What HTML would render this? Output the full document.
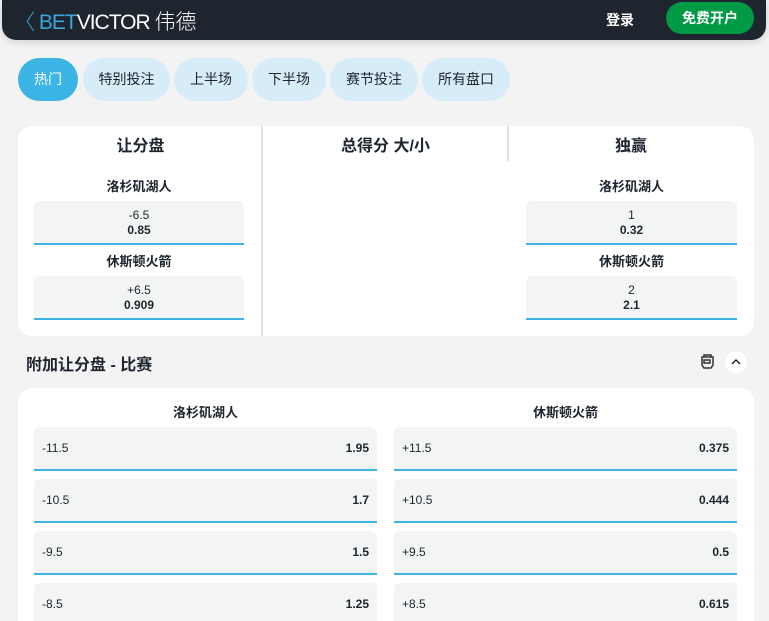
<!DOCTYPE html>
<html><head><meta charset="utf-8"><style>
*{box-sizing:border-box;margin:0;padding:0}
html,body{width:769px;height:621px;overflow:hidden}
body{background:#f3f3f3;font-family:"Liberation Sans","Noto Sans CJK SC",sans-serif;color:#1e252e;position:relative}
.hdr{position:absolute;left:2px;top:0;width:764px;height:40px;background:#1e252e;border-radius:0 0 14px 14px;box-shadow:0 2px 8px rgba(0,0,0,.15)}
.logo{position:absolute;left:12px;top:6px;font-size:21px;letter-spacing:-1px;color:#fff;font-weight:300}
.logo b{color:#3aa7d8;font-weight:300}
.login{position:absolute;left:604px;top:10px;color:#fff;font-weight:bold;font-size:14px}
.reg{position:absolute;left:664px;top:2px;width:88px;height:32px;border-radius:16px;background:#009a44;color:#fff;font-weight:bold;font-size:14px;text-align:center;line-height:32px}
.tab{position:absolute;top:58px;height:43px;border-radius:22px;background:#d6ecf8;font-size:14px;line-height:42px;text-align:center}
.card{position:absolute;left:18px;width:736px;background:#fff;border-radius:14px}
.ab{position:absolute;font-size:14px;text-align:center}
.h{font-weight:bold;font-size:16px}
.t{font-weight:bold;font-size:13px}
.btn{position:absolute;background:#f3f4f4;border-radius:6px 6px 0 0;border-bottom:2px solid #3cb4e5;font-size:12px;text-align:center;padding-top:7px;line-height:15px}
.btn b{display:block}
.row{position:absolute;height:44px;background:#f3f4f4;border-radius:6px 6px 0 0;border-bottom:2px solid #3cb4e5;font-size:12px;line-height:43px;padding:0 8px}
.row b{float:right}
.div{position:absolute;width:2px;background:#e2e2e2}
</style></head><body>
<div class="hdr"><div class="logo"><b>〈 BET</b>VICTOR <span style="letter-spacing:0">伟德</span></div><div class="login">登录</div><div class="reg">免费开户</div></div>
<div class="tab" style="left:18px;width:60px;background:#3cb4e5;color:#fff">热门</div>
<div class="tab" style="left:83px;width:87px">特别投注</div>
<div class="tab" style="left:174px;width:74px">上半场</div>
<div class="tab" style="left:252px;width:74px">下半场</div>
<div class="tab" style="left:330px;width:88px">赛节投注</div>
<div class="tab" style="left:422px;width:88px">所有盘口</div>
<div class="card" style="top:126px;height:210px">
<div class="div" style="left:243px;top:0;height:210px"></div>
<div class="div" style="left:489px;top:0;height:35px"></div>
<div class="ab h" style="left:0;width:245px;top:6px">让分盘</div>
<div class="ab h" style="left:245px;width:245px;top:6px">总得分 大/小</div>
<div class="ab h" style="left:490px;width:246px;top:6px">独赢</div>
<div class="ab t" style="left:16px;width:210px;top:50px">洛杉矶湖人</div>
<div class="ab t" style="left:16px;width:210px;top:125px">休斯顿火箭</div>
<div class="ab t" style="left:508px;width:211px;top:50px">洛杉矶湖人</div>
<div class="ab t" style="left:508px;width:211px;top:125px">休斯顿火箭</div>
<div class="btn" style="left:16px;top:75px;width:210px;height:44px">-6.5<b>0.85</b></div>
<div class="btn" style="left:16px;top:150px;width:210px;height:44px">+6.5<b>0.909</b></div>
<div class="btn" style="left:508px;top:75px;width:211px;height:44px">1<b>0.32</b></div>
<div class="btn" style="left:508px;top:150px;width:211px;height:44px">2<b>2.1</b></div>
</div>
<div class="ab" style="left:26px;top:351px;font-weight:bold;font-size:16px">附加让分盘 - 比赛</div>
<svg style="position:absolute;left:699px;top:353px" width="17" height="17" viewBox="0 0 17 17"><path d="M3 4h11v8l-2 3H5l-2-3z M5 2h7v2H5z M5 7h6v3H5z" fill="none" stroke="#333" stroke-width="1.5"/></svg>
<div style="position:absolute;left:725px;top:351px;width:22px;height:22px;border-radius:50%;background:#fff"><svg width="22" height="22" viewBox="0 0 22 22"><path d="M7 13l4-4 4 4" fill="none" stroke="#222" stroke-width="1.5"/></svg></div>
<div class="card" style="top:388px;height:233px;border-radius:14px 14px 0 0">
<div class="ab t" style="left:16px;width:343px;top:14px">洛杉矶湖人</div>
<div class="ab t" style="left:376px;width:343px;top:14px">休斯顿火箭</div>
<div class="row" style="left:16px;top:39px;width:343px">-11.5<b>1.95</b></div>
<div class="row" style="left:16px;top:91px;width:343px">-10.5<b>1.7</b></div>
<div class="row" style="left:16px;top:143px;width:343px">-9.5<b>1.5</b></div>
<div class="row" style="left:16px;top:195px;width:343px">-8.5<b>1.25</b></div>
<div class="row" style="left:376px;top:39px;width:343px">+11.5<b>0.375</b></div>
<div class="row" style="left:376px;top:91px;width:343px">+10.5<b>0.444</b></div>
<div class="row" style="left:376px;top:143px;width:343px">+9.5<b>0.5</b></div>
<div class="row" style="left:376px;top:195px;width:343px">+8.5<b>0.615</b></div>
</div>
</body></html>
